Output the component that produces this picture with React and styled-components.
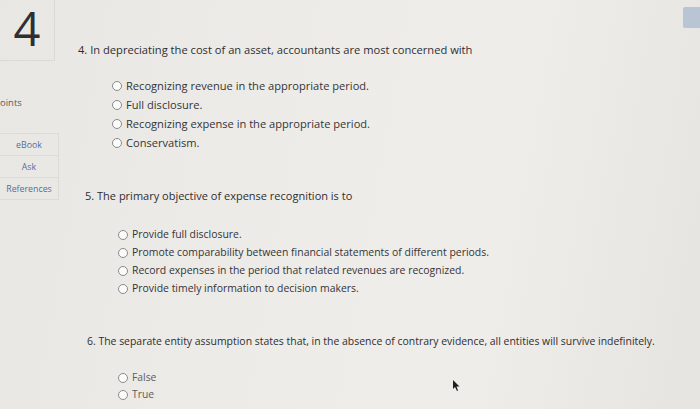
import React from 'react';
import styled, { createGlobalStyle } from 'styled-components';

const Global = createGlobalStyle`
  html, body { margin: 0; padding: 0; }
  body {
    width: 700px;
    height: 409px;
    overflow: hidden;
    background: linear-gradient(100deg, #e9e7e4 0%, #eeece9 45%, #efedea 70%, #e6e4e1 100%);
    font-family: "Open Sans", Lato, sans-serif;
    color: #3a3a3c;
  }
`;

const Page = styled.div`
  display: flex;
  height: 409px;
  position: relative;
`;

const Side = styled.aside`
  width: 62px;
  flex: none;
  display: flex;
  flex-direction: column;
`;

const NumberBox = styled.div`
  width: 54px;
  padding: 2px 0 6px;
  border-right: 1px solid #dcdad6;
  border-bottom: 1px solid #dcdad6;
  text-align: center;
  font-size: 47px;
  font-weight: 400;
  color: #2f2f31;
  line-height: 52px;
`;

const Points = styled.div`
  margin-top: 35px;
  font-size: 9.5px;
  color: #5a5a5c;
`;

const Tools = styled.div`
  margin-top: 24px;
  width: 58px;
  border: 1px solid #dddbd7;
  border-left: none;
  display: flex;
  flex-direction: column;
`;

const Tool = styled.div`
  height: 21px;
  display: flex;
  align-items: center;
  justify-content: center;
  font-size: 8.8px;
  color: #50709d;
  border-top: ${p => (p.$first ? 'none' : '1px solid #dddbd7')};
`;

const Main = styled.main`
  flex: 1;
  display: flex;
  flex-direction: column;
`;

const Question = styled.section`
  margin-left: ${p => p.$indent}px;
  margin-top: ${p => p.$top}px;
`;

const Prompt = styled.div`
  font-size: ${p => p.$size}px;
  color: #2e2e30;
  white-space: nowrap;
  line-height: 14px;
`;

const Options = styled.ul`
  list-style: none;
  margin: ${p => p.$gap}px 0 0 ${p => p.$indent}px;
  padding: 0;
  display: flex;
  flex-direction: column;
  gap: ${p => p.$step}px;
`;

const Option = styled.li`
  display: flex;
  align-items: center;
  gap: 4px;
  font-size: ${p => p.$size}px;
  color: ${p => (p.$faint ? '#5c5c5e' : '#343436')};
  line-height: 13px;
  white-space: nowrap;
`;

const Radio = styled.span`
  width: 8px;
  height: 8px;
  border: 1px solid #8a8a8c;
  border-radius: 50%;
  background: #fbfbfa;
  flex: none;
`;

const Corner = styled.div`
  position: absolute;
  top: 7px;
  right: 0;
  width: 17px;
  height: 21px;
  background: #b9c4d5;
  border-radius: 2px 0 0 2px;
`;

const Cursor = styled.svg`
  position: absolute;
  left: 452px;
  top: 380px;
`;

const q4 = [
  'Recognizing revenue in the appropriate period.',
  'Full disclosure.',
  'Recognizing expense in the appropriate period.',
  'Conservatism.',
];

const q5 = [
  'Provide full disclosure.',
  'Promote comparability between financial statements of different periods.',
  'Record expenses in the period that related revenues are recognized.',
  'Provide timely information to decision makers.',
];

export default function App() {
  return (
    <Page>
      <Global />
      <Side>
        <NumberBox>4</NumberBox>
        <Points>oints</Points>
        <Tools>
          <Tool $first>eBook</Tool>
          <Tool>Ask</Tool>
          <Tool>References</Tool>
        </Tools>
      </Side>
      <Main>
        <Question $indent={16} $top={43}>
          <Prompt $size={11.15}>4. In depreciating the cost of an asset, accountants are most concerned with</Prompt>
          <Options $gap={22} $indent={34} $step={6}>
            {q4.map(t => (
              <Option key={t} $size={11.1}><Radio />{t}</Option>
            ))}
          </Options>
        </Question>
        <Question $indent={23} $top={40}>
          <Prompt $size={11}>5. The primary objective of expense recognition is to</Prompt>
          <Options $gap={25} $indent={33} $step={5}>
            {q5.map(t => (
              <Option key={t} $size={10.45}><Radio />{t}</Option>
            ))}
          </Options>
        </Question>
        <Question $indent={25} $top={39}>
          <Prompt $size={10.45}>6. The separate entity assumption states that, in the absence of contrary evidence, all entities will survive indefinitely.</Prompt>
          <Options $gap={23} $indent={31} $step={4}>
            <Option $size={10.3} $faint><Radio />False</Option>
            <Option $size={10.3} $faint><Radio />True</Option>
          </Options>
        </Question>
      </Main>
      <Corner />
      <Cursor width="8" height="11" viewBox="0 0 8 11">
        <path d="M1 0 L1 9 L3 7 L5 11 L6 10.5 L4.5 6.5 L7.5 6.5 Z" fill="#1e1e20" />
      </Cursor>
    </Page>
  );
}
